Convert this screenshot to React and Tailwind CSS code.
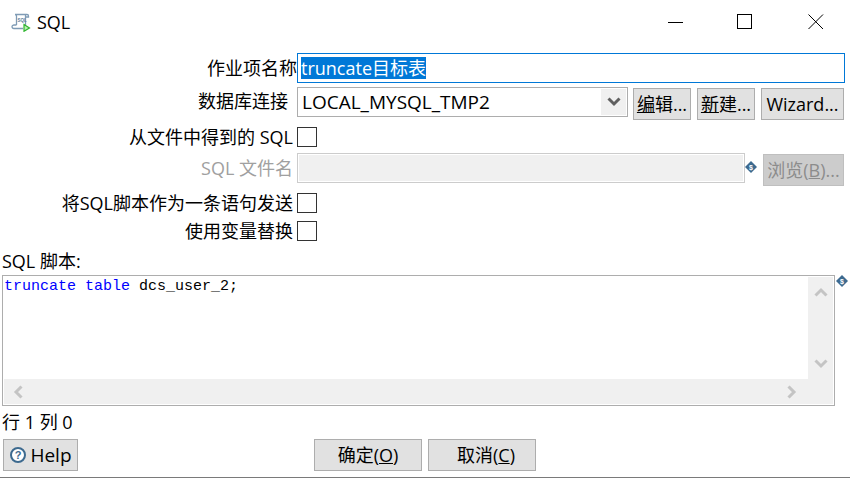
function SqlIcon() {
  return (
    <svg width="20" height="20" viewBox="0 0 20 20" fill="none">
      <path d="M4 2.500h12c1 0 1.500.8 1.500 1.600V5h-3M4 2.500c1 0 1.500.8 1.500 1.600V13M14.500 3v10.500M5.500 13H3c-1 0-2 .6-2 1.600 0 1 .8 1.900 2 1.900h9" stroke="#7f9bb5" strokeWidth="1.300" />
      <text x="6.500" y="9.500" fontSize="4.500" fontWeight="700" fill="#5f7f9c" fontFamily="Liberation Sans, sans-serif">SQL</text>
      <path d="M13 12.500l5.500 3.500-5.500 3.300z" fill="#b9f0b0" stroke="#2fb52f" strokeWidth="1.200" />
    </svg>
  );
}

function WinButtons() {
  return (
    <div className="flex items-center">
      <svg width="16" height="16" viewBox="0 0 16 16" className="mr-[53px]"><path d="M0 8.500h15" stroke="#000" /></svg>
      <svg width="16" height="16" viewBox="0 0 16 16" className="mr-[55px]"><rect x="0.500" y="0.500" width="14" height="14" stroke="#000" fill="none" /></svg>
      <svg width="16" height="16" viewBox="0 0 16 16" className="mr-[26px]"><path d="M0.500 0.500l14.500 14.500M15 0.500L0.500 15" stroke="#000" /></svg>
    </div>
  );
}

function DollarBadge({ className }) {
  return (
    <svg width="12" height="12" viewBox="0 0 12 12" className={className}>
      <path d="M6 0l6 6-6 6-6-6z" fill="#3d6a8f" />
      <text x="6" y="8.500" textAnchor="middle" fontSize="7" fontWeight="700" fill="#fff" fontFamily="Liberation Sans, sans-serif">$</text>
    </svg>
  );
}

function Btn({ children, className = "" }) {
  return (
    <button className={`flex items-center justify-center border border-[#adadad] bg-[#e1e1e1] text-[18px] leading-none text-black ${className}`}>
      {children}
    </button>
  );
}

function Check() {
  return <span className="block w-[20px] h-[20px] border border-[#333] bg-white" />;
}

function CheckRow({ label, className = "" }) {
  return (
    <div className={`flex items-center ${className}`}>
      <span className="w-[293px] text-right whitespace-nowrap">{label}</span>
      <span className="ml-[4px]"><Check /></span>
    </div>
  );
}

function Chevron({ dir, color = "#c4c4c4", size = 14 }) {
  const d = {
    up: "M1.500 10.500L7 5l5.500 5.500",
    down: "M1.500 3.500L7 9l5.500-5.500",
    left: "M10.500 1.500L5 7l5.500 5.500",
    right: "M3.500 1.500L9 7l-5.500 5.500",
  }[dir];
  return (
    <svg width={size} height={size} viewBox="0 0 14 14" fill="none">
      <path d={d} stroke={color} strokeWidth="3" />
    </svg>
  );
}

export default function App() {
  return (
    <div className="w-[850px] h-[478px] bg-white border-b border-[#7a7a7a] overflow-hidden text-[18px] leading-[24px] text-black font-['Open_Sans','Noto_Sans_CJK_SC',sans-serif]">
      {/* title bar */}
      <div className="h-[44px] flex items-center justify-between">
        <div className="flex items-center pl-[11px]">
          <SqlIcon />
          <span className="ml-[6px] text-[18px]">SQL</span>
        </div>
        <WinButtons />
      </div>

      {/* name */}
      <div className="mt-[9px] flex items-center h-[30px]">
        <span className="w-[297px] text-right whitespace-nowrap">作业项名称</span>
        <div className="w-[548px] h-[30px] border border-[#0078d7] pl-[3px] flex items-center">
          <span className="bg-[#0078d7] text-white leading-[22px] whitespace-nowrap">truncate目标表</span>
        </div>
      </div>

      {/* connection */}
      <div className="mt-[4px] flex items-start h-[33px]">
        <span className="w-[288px] h-[30px] leading-[28px] text-right whitespace-nowrap">数据库连接</span>
        <div className="ml-[9px] w-[331px] h-[30px] border border-[#adadad] flex items-center justify-between pl-[4px] pr-[1px]">
          <span className="text-[19px] whitespace-nowrap">LOCAL_MYSQL_TMP2</span>
          <span className="w-[25px] h-[26px] bg-[#f0f0f0] flex items-center justify-center">
            <Chevron dir="down" color="#606060" />
          </span>
        </div>
        <Btn className="ml-[5px] mt-[1px] w-[58px] h-[32px]"><span><u>编</u>辑...</span></Btn>
        <Btn className="ml-[6px] mt-[1px] w-[58px] h-[32px]"><span><u>新</u>建...</span></Btn>
        <Btn className="ml-[6px] mt-[1px] w-[83px] h-[32px]">Wizard...</Btn>
      </div>

      <CheckRow label="从文件中得到的 SQL" className="mt-[7px] h-[20px]" />

      {/* sql file */}
      <div className="mt-[6px] flex items-start h-[33px]">
        <span className="w-[293px] h-[30px] leading-[30px] text-right text-[#a0a0a0] whitespace-nowrap">SQL 文件名</span>
        <div className="ml-[4px] w-[448px] h-[30px] border border-[#cccccc] p-px">
          <div className="w-full h-full bg-[#f0f0f0]" />
        </div>
        <DollarBadge className="mt-[8px]" />
        <button className="ml-[6px] mt-[1px] w-[81px] h-[32px] flex items-center justify-center bg-[#cccccc] border border-[#bfbfbf] text-[#8c8c8c] text-[18px] leading-none">
          <span>浏览(<u>B</u>)...</span>
        </button>
      </div>

      <CheckRow label="将SQL脚本作为一条语句发送" className="mt-[7px] h-[20px]" />
      <CheckRow label="使用变量替换" className="mt-[8px] h-[20px]" />

      <div className="mt-[8px] ml-[2px] h-[24px]">SQL 脚本:</div>

      {/* script editor */}
      <div className="relative mt-[2px] ml-[2px] w-[833px] h-[131px] border border-[#adadad] flex flex-col">
        <DollarBadge className="absolute top-[-1px] right-[-14px]" />
        <div className="h-[103px] flex">
          <div className="flex-1 pl-[1px] pt-[2px] font-['Liberation_Mono',monospace] text-[15px] leading-[17px] whitespace-pre">
            <span className="text-[#0000ff]">truncate table</span> dcs_user_2;
          </div>
          <div className="w-[25px] mr-px mt-px bg-[#f0f0f0] flex flex-col justify-between items-center py-[8px]">
            <Chevron dir="up" />
            <Chevron dir="down" />
          </div>
        </div>
        <div className="mx-px h-[25px] bg-[#f0f0f0] flex items-center justify-between px-[7px]">
          <Chevron dir="left" />
          <span className="mr-[27px]"><Chevron dir="right" /></span>
        </div>
      </div>

      <div className="mt-[4px] ml-[2px] h-[24px]">行 1 列 0</div>

      {/* footer buttons */}
      <div className="mt-[5px] h-[32px] flex">
        <Btn className="ml-[3px] w-[75px] h-[32px] text-[19px]">
          <svg width="18" height="18" viewBox="0 0 18 18" className="mr-[3px]">
            <circle cx="9" cy="9" r="7" fill="#fff" stroke="#3d6a8f" strokeWidth="2" />
            <text x="9" y="13" textAnchor="middle" fontSize="11" fontWeight="700" fill="#3d6a8f" fontFamily="Liberation Sans, sans-serif">?</text>
          </svg>
          Help
        </Btn>
        <Btn className="ml-[236px] w-[108px] h-[32px]"><span>确定(<u>O</u>)</span></Btn>
        <Btn className="ml-[6px] w-[108px] h-[32px] pl-[8px]"><span>取消(<u>C</u>)</span></Btn>
      </div>
    </div>
  );
}
